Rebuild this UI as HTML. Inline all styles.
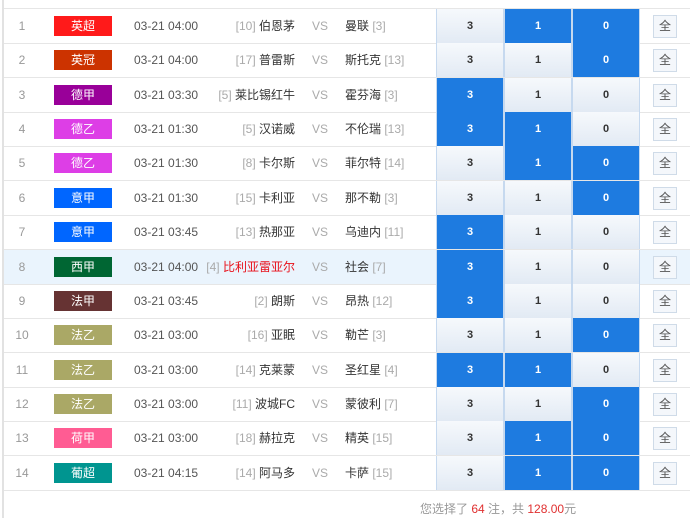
<!DOCTYPE html><html><head><meta charset="utf-8"><style>
*{margin:0;padding:0;box-sizing:border-box}
body{width:690px;height:518px;background:#fff;position:relative;overflow:hidden;font-family:"Liberation Sans","Noto Sans CJK SC",sans-serif;font-size:12px;color:#333}
.bar{position:absolute;left:2px;top:0;width:2px;height:518px;background:#e2e2e2}
.r{position:absolute;left:4px;width:686px;height:35px;border-bottom:1px solid #e6e6e6}
.r.hl{background:#eaf4fd}
.r>*{position:absolute;top:0;height:34px;line-height:34px}
.n{left:0;width:36px;text-align:center;color:#999}
.b{left:50px;top:7px!important;width:58px;height:20px!important;line-height:20px!important;text-align:center;color:#fff}
.t{left:130px;color:#555}
.h{right:395px;text-align:right;color:#333;white-space:nowrap}
.h i,.a i{font-style:normal;color:#aaa}
.vs{left:308px;color:#aaa}
.a{left:341px;white-space:nowrap}
.c{width:68px;text-align:center;font-weight:bold;font-size:11px;color:#333;background:linear-gradient(#f6f9fc,#e2eaf4);border-right:1px solid #c6d9ef;border-left:1px solid #c6d9ef}
.c.s{background:#1e7be0;color:#fff}
.c1{left:432px}.c2{left:500px}.c3{left:568px}
.q{left:649px;top:6px!important;width:24px;height:23px!important;line-height:21px!important;text-align:center;border:1px solid #cfdbe8;background:#f4f7fb;color:#555;font-size:12px}
.foot{position:absolute;top:500px;left:420px;color:#999;font-size:12px}
.foot b{font-weight:normal;color:#e03030}
</style></head><body>
<div class="bar"></div>
<div style="position:absolute;left:4px;top:0;width:686px;height:9px;border-bottom:1px solid #e6e6e6"></div>

<div class="r" style="top:9px"><span class="n">1</span><span class="b" style="background:#ff1a1a">英超</span><span class="t">03-21 04:00</span><span class="h"><i>[10]</i> 伯恩茅</span><span class="vs">VS</span><span class="a">曼联 <i>[3]</i></span><span class="c c1">3</span><span class="c c2 s">1</span><span class="c c3 s">0</span><span class="q">全</span></div>
<div class="r" style="top:43.4px"><span class="n">2</span><span class="b" style="background:#cc3300">英冠</span><span class="t">03-21 04:00</span><span class="h"><i>[17]</i> 普雷斯</span><span class="vs">VS</span><span class="a">斯托克 <i>[13]</i></span><span class="c c1">3</span><span class="c c2">1</span><span class="c c3 s">0</span><span class="q">全</span></div>
<div class="r" style="top:77.7px"><span class="n">3</span><span class="b" style="background:#990099">德甲</span><span class="t">03-21 03:30</span><span class="h"><i>[5]</i> 莱比锡红牛</span><span class="vs">VS</span><span class="a">霍芬海 <i>[3]</i></span><span class="c c1 s">3</span><span class="c c2">1</span><span class="c c3">0</span><span class="q">全</span></div>
<div class="r" style="top:112.1px"><span class="n">4</span><span class="b" style="background:#dd3ee6">德乙</span><span class="t">03-21 01:30</span><span class="h"><i>[5]</i> 汉诺威</span><span class="vs">VS</span><span class="a">不伦瑞 <i>[13]</i></span><span class="c c1 s">3</span><span class="c c2 s">1</span><span class="c c3">0</span><span class="q">全</span></div>
<div class="r" style="top:146.4px"><span class="n">5</span><span class="b" style="background:#dd3ee6">德乙</span><span class="t">03-21 01:30</span><span class="h"><i>[8]</i> 卡尔斯</span><span class="vs">VS</span><span class="a">菲尔特 <i>[14]</i></span><span class="c c1">3</span><span class="c c2 s">1</span><span class="c c3 s">0</span><span class="q">全</span></div>
<div class="r" style="top:180.8px"><span class="n">6</span><span class="b" style="background:#0066ff">意甲</span><span class="t">03-21 01:30</span><span class="h"><i>[15]</i> 卡利亚</span><span class="vs">VS</span><span class="a">那不勒 <i>[3]</i></span><span class="c c1">3</span><span class="c c2">1</span><span class="c c3 s">0</span><span class="q">全</span></div>
<div class="r" style="top:215.2px"><span class="n">7</span><span class="b" style="background:#0066ff">意甲</span><span class="t">03-21 03:45</span><span class="h"><i>[13]</i> 热那亚</span><span class="vs">VS</span><span class="a">乌迪内 <i>[11]</i></span><span class="c c1 s">3</span><span class="c c2">1</span><span class="c c3">0</span><span class="q">全</span></div>
<div class="r hl" style="top:249.5px"><span class="n">8</span><span class="b" style="background:#006633">西甲</span><span class="t">03-21 04:00</span><span class="h"><i>[4]</i> <span style="color:#e8101a">比利亚雷亚尔</span></span><span class="vs">VS</span><span class="a">社会 <i>[7]</i></span><span class="c c1 s">3</span><span class="c c2">1</span><span class="c c3">0</span><span class="q">全</span></div>
<div class="r" style="top:283.9px"><span class="n">9</span><span class="b" style="background:#663333">法甲</span><span class="t">03-21 03:45</span><span class="h"><i>[2]</i> 朗斯</span><span class="vs">VS</span><span class="a">昂热 <i>[12]</i></span><span class="c c1 s">3</span><span class="c c2">1</span><span class="c c3">0</span><span class="q">全</span></div>
<div class="r" style="top:318.2px"><span class="n">10</span><span class="b" style="background:#aaa866">法乙</span><span class="t">03-21 03:00</span><span class="h"><i>[16]</i> 亚眠</span><span class="vs">VS</span><span class="a">勒芒 <i>[3]</i></span><span class="c c1">3</span><span class="c c2">1</span><span class="c c3 s">0</span><span class="q">全</span></div>
<div class="r" style="top:352.6px"><span class="n">11</span><span class="b" style="background:#aaa866">法乙</span><span class="t">03-21 03:00</span><span class="h"><i>[14]</i> 克莱蒙</span><span class="vs">VS</span><span class="a">圣红星 <i>[4]</i></span><span class="c c1 s">3</span><span class="c c2 s">1</span><span class="c c3">0</span><span class="q">全</span></div>
<div class="r" style="top:387px"><span class="n">12</span><span class="b" style="background:#aaa866">法乙</span><span class="t">03-21 03:00</span><span class="h"><i>[11]</i> 波城FC</span><span class="vs">VS</span><span class="a">蒙彼利 <i>[7]</i></span><span class="c c1">3</span><span class="c c2">1</span><span class="c c3 s">0</span><span class="q">全</span></div>
<div class="r" style="top:421.3px"><span class="n">13</span><span class="b" style="background:#ff5c93">荷甲</span><span class="t">03-21 03:00</span><span class="h"><i>[18]</i> 赫拉克</span><span class="vs">VS</span><span class="a">精英 <i>[15]</i></span><span class="c c1">3</span><span class="c c2 s">1</span><span class="c c3 s">0</span><span class="q">全</span></div>
<div class="r" style="top:455.7px"><span class="n">14</span><span class="b" style="background:#009590">葡超</span><span class="t">03-21 04:15</span><span class="h"><i>[14]</i> 阿马多</span><span class="vs">VS</span><span class="a">卡萨 <i>[15]</i></span><span class="c c1">3</span><span class="c c2 s">1</span><span class="c c3 s">0</span><span class="q">全</span></div>

<div class="foot">您选择了 <b>64</b> 注，共 <b>128.00</b>元</div>
</body></html>
